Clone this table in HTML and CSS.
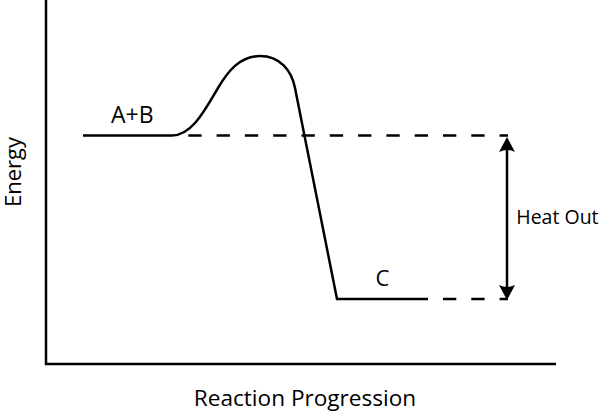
FILE: index.html
```html
<!DOCTYPE html>
<html lang="en">
<head>
<meta charset="utf-8">
<title>Energy diagram</title>
<link rel="stylesheet" href="styles.css">
</head>
<body>
<div class="chart">
  <div class="ylabel"><span class="ytext">Energy</span></div>
  <svg class="plot" width="556" height="366" viewBox="44 0 556 366" xmlns="http://www.w3.org/2000/svg">
    <path class="line axis" d="M46,0 V364 H556"/>
    <path class="line" d="M83,135.5 H172 C192,135.5 205,110 218,88 C228,71 240,56 260,56 C280,56 291.5,70.5 295,88 L337,299 H428"/>
    <path class="line dash" d="M188.3,135.5 H508"/>
    <path class="line dash" d="M443,299 H508"/>
    <path class="line" d="M507,147 V290"/>
    <path class="head" d="M507,137 L515,152 Q507,148 499,152 Z"/>
    <path class="head" d="M507,300 L515,285 Q507,289 499,285 Z"/>
    <text class="lbl lbl-ab" x="111" y="123.3">A+B</text>
    <text class="lbl lbl-c" x="375.5" y="285.7">C</text>
    <text class="lbl lbl-heat" x="516.3" y="224.3">Heat Out</text>
  </svg>
  <div class="xlabel">Reaction Progression</div>
</div>
</body>
</html>
```
FILE: styles.css
```css
html, body {
  margin: 0;
  padding: 0;
  background: #ffffff;
}
body {
  font-family: "Open Sans", "Liberation Sans", sans-serif;
  color: #000000;
}
.chart {
  display: grid;
  grid-template-columns: 44px 556px;
  grid-template-rows: 366px 46px;
  width: 600px;
  height: 412px;
  overflow: hidden;
}
.ylabel {
  display: flex;
  align-items: center;
  justify-content: flex-start;
  padding-bottom: 21px;
  padding-left: 1px;
  box-sizing: border-box;
}
.ytext {
  writing-mode: vertical-rl;
  transform: rotate(180deg);
  font-size: 22px;
  line-height: 22px;
  white-space: nowrap;
}
.plot {
  display: block;
  overflow: visible;
}
.line {
  fill: none;
  stroke: #000000;
  stroke-width: 2.5;
  stroke-linejoin: miter;
}
.dash {
  stroke-width: 2.3;
  stroke-dasharray: 13.3 15;
}
.head {
  fill: #000000;
}
.lbl {
  font-family: "Open Sans", "Liberation Sans", sans-serif;
  fill: #000000;
}
.lbl-ab {
  font-size: 23px;
}
.lbl-c {
  font-size: 22px;
}
.lbl-heat {
  font-size: 19.5px;
}
.xlabel {
  grid-column: 1 / 3;
  text-align: center;
  font-size: 22.6px;
  line-height: 22px;
  padding-top: 21px;
  padding-left: 10px;
  white-space: nowrap;
}
```
